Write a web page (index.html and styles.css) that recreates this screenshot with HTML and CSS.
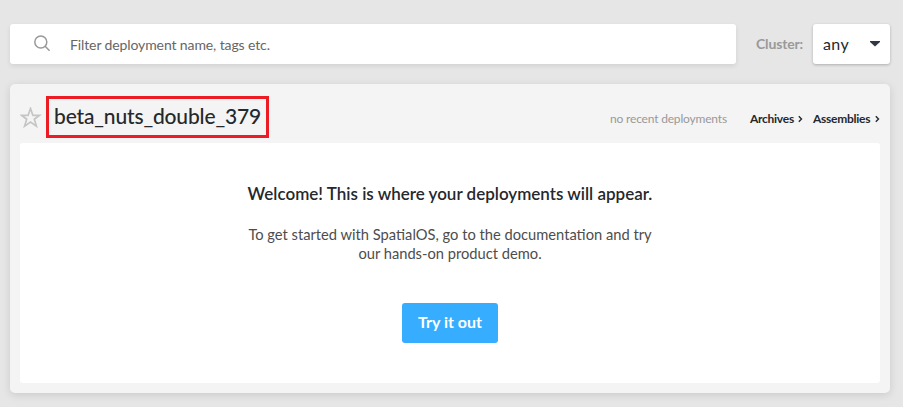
FILE: index.html
```html
<!DOCTYPE html>
<html lang="en">
<head>
<meta charset="utf-8">
<title>Deployments</title>
<link rel="stylesheet" href="styles.css">
</head>
<body>
<header class="toolbar">
  <label class="search">
    <svg class="search-icon" width="18" height="18" viewBox="0 0 18 18"><circle cx="6.8" cy="7" r="6"/><path d="M11.1 11.3 15.6 15.8"/></svg>
    <span class="search-text">Filter deployment name, tags etc.</span>
  </label>
  <span class="cluster-label">Cluster:</span>
  <div class="select"><span>any</span><svg width="10" height="6" viewBox="0 0 10 6"><path d="M0 0H10V1L5 5.5 0 1Z"/></svg></div>
</header>
<main class="project">
  <div class="project-head">
    <svg class="star" width="22" height="22" viewBox="0 0 22 22"><path d="M10.5 1.5 12.9 8.3H19.6L14.3 12.2 16.4 19.1 10.5 15 4.6 19.1 6.7 12.2 1.4 8.3H8.1Z"/></svg>
    <h1 class="name">beta_nuts_double_379</h1>
    <span class="recent">no recent deployments</span>
    <a class="link archives">Archives<svg width="5" height="8" viewBox="0 0 5 8"><path d="M.8 1.3 3.5 4 .8 6.7"/></svg></a>
    <a class="link assemblies">Assemblies<svg width="5" height="8" viewBox="0 0 5 8"><path d="M.8 1.3 3.5 4 .8 6.7"/></svg></a>
  </div>
  <section class="panel">
    <h2 class="welcome">Welcome! This is where your deployments will appear.</h2>
    <p class="intro">To get started with SpatialOS, go to the documentation and try<br>our hands-on product demo.</p>
    <button class="try">Try it out</button>
  </section>
</main>
</body>
</html>
```
FILE: styles.css
```css
* { box-sizing: border-box; }
body {
  margin: 0;
  height: 407px;
  padding: 24px 13px 0 10px;
  overflow: hidden;
  background: #e6e6e6;
  color: #25282d;
  font-family: Lato, "Open Sans", sans-serif;
  white-space: nowrap;
}
.toolbar { display: flex; height: 40px; align-items: center; }
.search {
  display: flex;
  align-items: center;
  width: 726px;
  height: 40px;
  padding-left: 24px;
  background: #fff;
  border-radius: 3px;
  box-shadow: 0 2px 5px rgba(0,0,0,.09);
}
.search-icon { fill: none; stroke: #999; stroke-width: 1.5; }
.search-text { margin: 1px 0 0 18px; font-size: 14px; letter-spacing: -.11px; color: #666; }
.cluster-label { width: 57px; margin: -2px 0 0 20px; font-size: 14px; font-weight: 700; letter-spacing: -.15px; color: #999; }
.select {
  display: flex;
  align-items: center;
  justify-content: space-between;
  width: 77px;
  height: 40px;
  padding: 0 10px;
  background: #fff;
  border-radius: 3px;
  box-shadow: 0 1px 3px rgba(0,0,0,.25);
  font-size: 16px;
  letter-spacing: .35px;
}
.select span { padding-bottom: 2px; }
.select svg { fill: #303846; }
.project {
  height: 309px;
  margin-top: 20px;
  padding: 0 10px;
  background: #f4f4f4;
  border-radius: 5px;
  box-shadow: 0 2px 8px rgba(0,0,0,.12);
}
.project-head { display: flex; height: 59px; padding-top: 12px; }
.star { flex: none; margin: 11px 4px 0 0; fill: none; stroke: #c5c5c5; stroke-width: 1.7; }
.name {
  flex: none;
  width: 223px;
  height: 42px;
  margin: 0;
  padding-left: 5px;
  border: 3px solid #ed1c24;
  font-size: 21px;
  font-weight: 500;
  line-height: 34px;
  letter-spacing: -.16px;
}
.recent { flex: none; width: 118px; margin: 15px 0 0 341px; font-size: 12px; line-height: 16px; letter-spacing: -.18px; color: #999; }
.link { flex: none; display: flex; align-items: center; justify-content: space-between; height: 16px; margin-top: 14px; font-size: 12px; font-weight: 700; letter-spacing: -.27px; }
.link svg { margin-top: 2px; fill: none; stroke: #25282d; stroke-width: 1.4; }
.archives { width: 53px; margin-left: 22px; }
.assemblies { width: 67px; margin-left: 10px; }
.panel { height: 240px; padding-top: 41px; background: #fff; border-radius: 3px; text-align: center; }
.welcome { margin: 0; font-size: 17px; line-height: 20px; font-weight: 600; }
.intro { margin: 21px 0 0; font-size: 14.7px; line-height: 19px; color: #4d4d4d; }
.try {
  width: 96px;
  height: 40px;
  margin-top: 40px;
  padding: 0 0 3px;
  border: 0;
  border-radius: 3px;
  background: #36adff;
  color: #fff;
  font: 700 16px/37px Lato, sans-serif;
}
```
